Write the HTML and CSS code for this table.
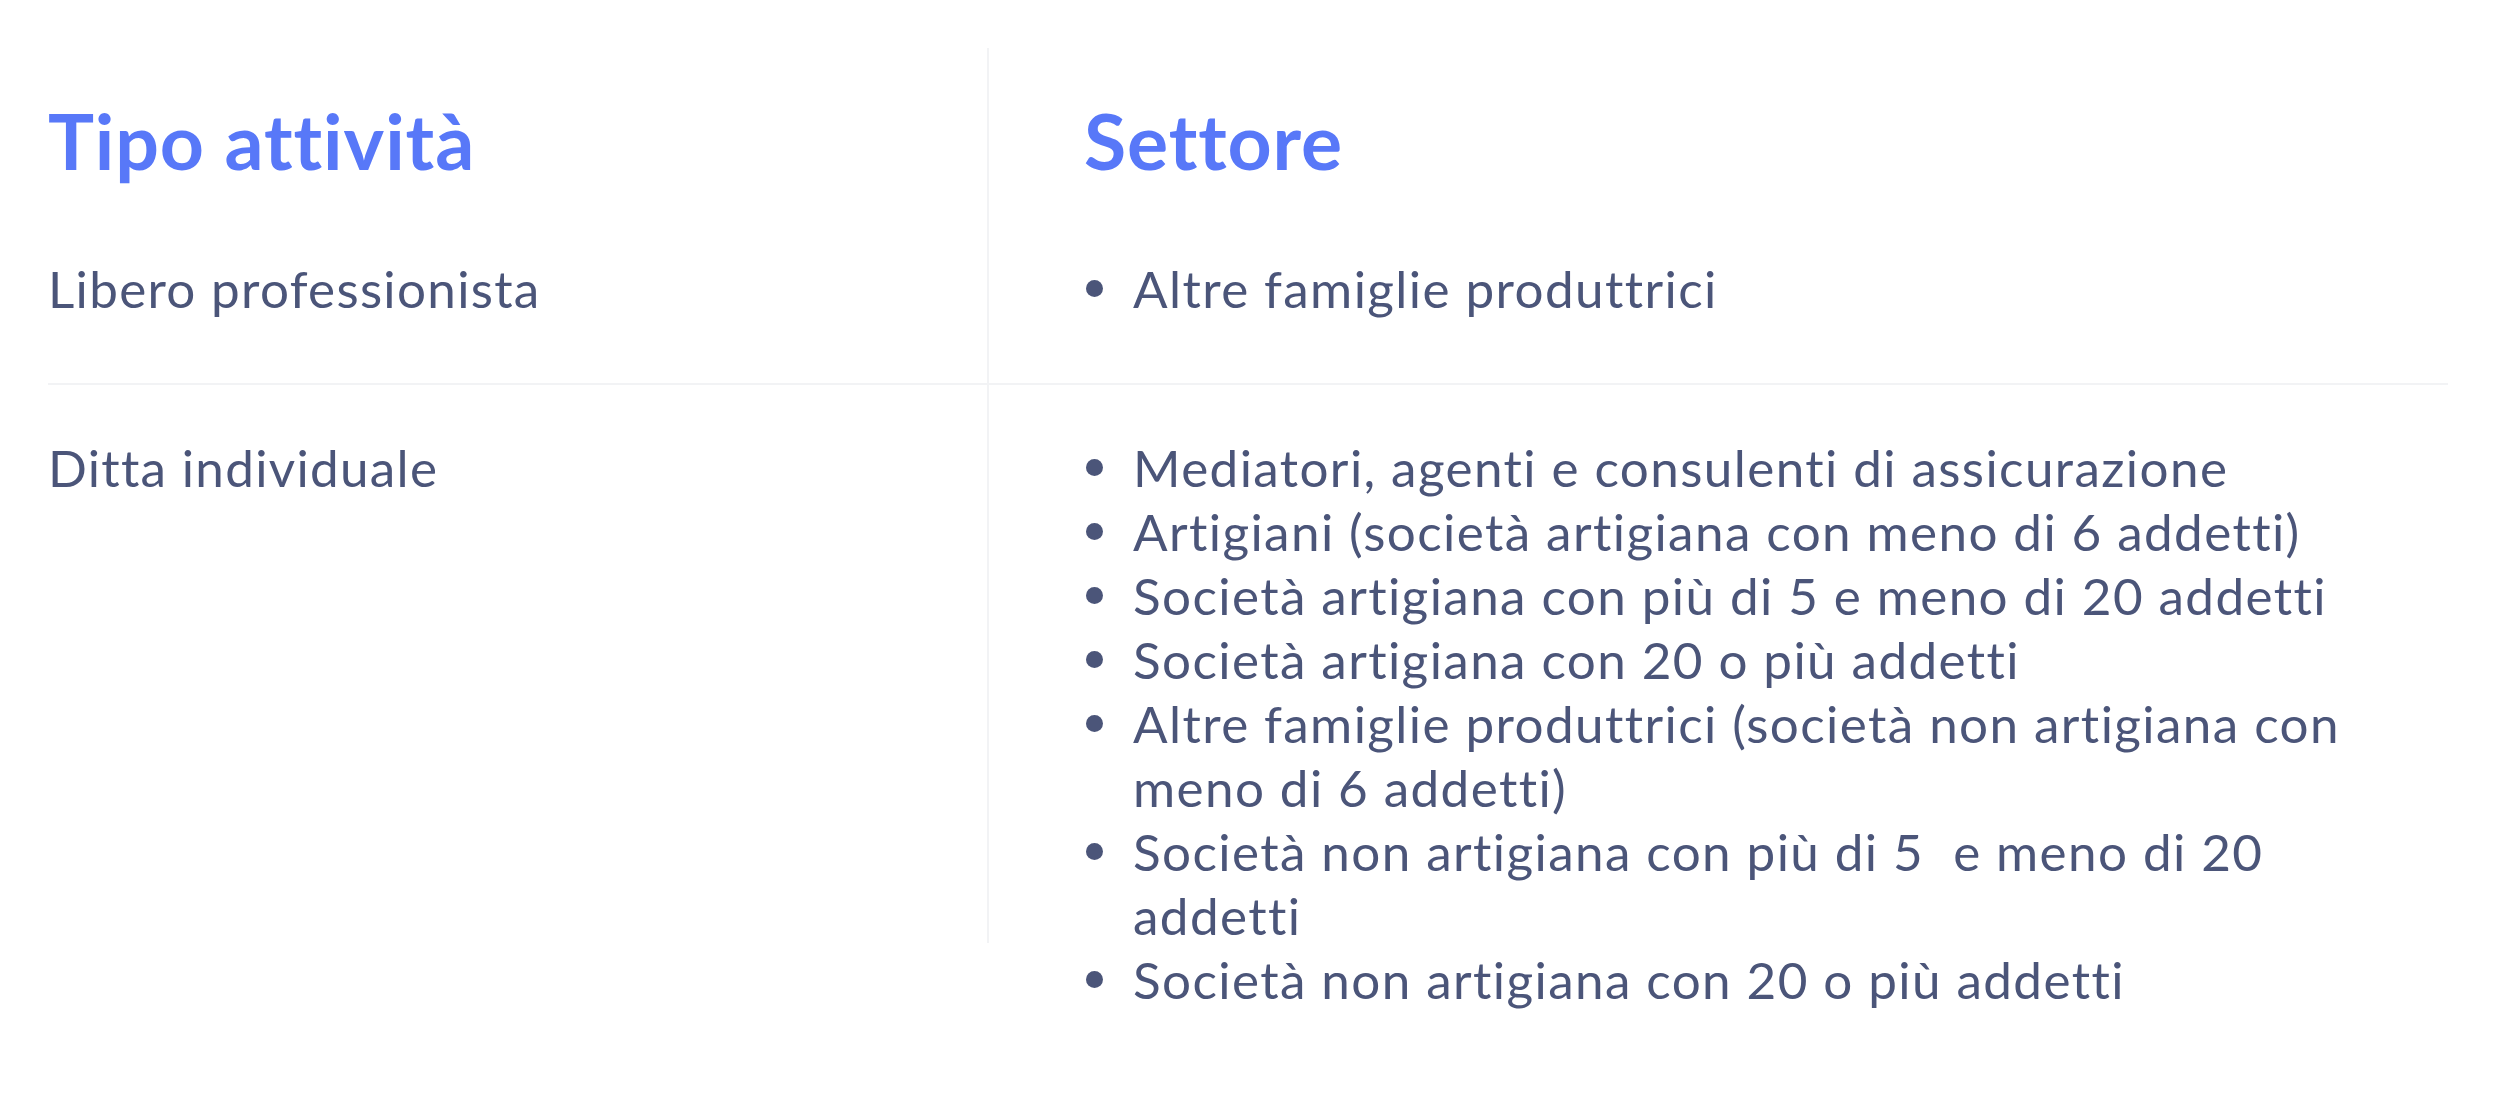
FILE: index.html
```html
<!DOCTYPE html>
<html lang="it">
<head>
<meta charset="utf-8">
<title>Tipo attività / Settore</title>
<link rel="stylesheet" href="styles.css">
</head>
<body>
<div class="table">
  <div class="row head">
    <div class="cell c1"><h2 class="title">Tipo attività</h2></div>
    <div class="cell c2"><h2 class="title">Settore</h2></div>
  </div>
  <div class="row r1">
    <div class="cell c1"><p class="text">Libero professionista</p></div>
    <div class="cell c2">
      <ul class="list">
        <li><span>Altre famiglie produttrici</span></li>
      </ul>
    </div>
  </div>
  <div class="row r2">
    <div class="cell c1"><p class="text">Ditta individuale</p></div>
    <div class="cell c2">
      <ul class="list">
        <li><span>Mediatori, agenti e consulenti di assicurazione</span></li>
        <li><span>Artigiani (società artigiana con meno di 6 addetti)</span></li>
        <li><span>Società artigiana con più di 5 e meno di 20 addetti</span></li>
        <li><span>Società artigiana con 20 o più addetti</span></li>
        <li><span>Altre famiglie produttrici (società non artigiana con meno di 6 addetti)</span></li>
        <li><span>Società non artigiana con più di 5&nbsp; e meno di 20 addetti</span></li>
        <li><span>Società non artigiana con 20 o più addetti</span></li>
      </ul>
    </div>
  </div>
</div>
</body>
</html>
```
FILE: styles.css
```css
html, body {
  margin: 0;
  padding: 0;
  background: #ffffff;
}
body {
  font-family: Lato, "Liberation Sans", sans-serif;
  color: #4b5579;
  font-variant-ligatures: none;
}
.table {
  margin: 48px 0 0 48px;
  width: 2400px;
}
.row {
  display: grid;
  grid-template-columns: 941px 1fr;
}
.cell {
  box-sizing: border-box;
}
.c1 {
  border-right: 2px solid #f2f3f5;
}
.c2 {
  padding-left: 95px;
  padding-right: 96px;
}
.head .cell {
  padding-top: 44px;
}
.title {
  margin: 0;
  font-size: 77px;
  line-height: 96px;
  font-weight: 700;
  letter-spacing: 0.9px;
  color: #5878f8;
}
.r1 {
  border-bottom: 2px solid #f2f3f5;
}
.r1 .cell {
  padding-top: 68px;
  padding-bottom: 63px;
}
.r2 {
  align-items: start;
}
.r2 .c1 {
  height: 558px;
}
.r2 .cell {
  padding-top: 50px;
}
.text {
  margin: 0;
  font-size: 51.2px;
  line-height: 64px;
  font-weight: 400;
  letter-spacing: 1.3px;
}
.list {
  margin: 0;
  padding: 0;
  list-style: none;
  font-size: 51.2px;
  line-height: 64px;
  letter-spacing: 1.4px;
}
.list li {
  display: flex;
  align-items: flex-start;
}
.list li::before {
  content: "";
  flex: 0 0 17px;
  height: 17px;
  margin: 24px 30px 0 2px;
  border-radius: 50%;
  background: #4b5579;
}
```
